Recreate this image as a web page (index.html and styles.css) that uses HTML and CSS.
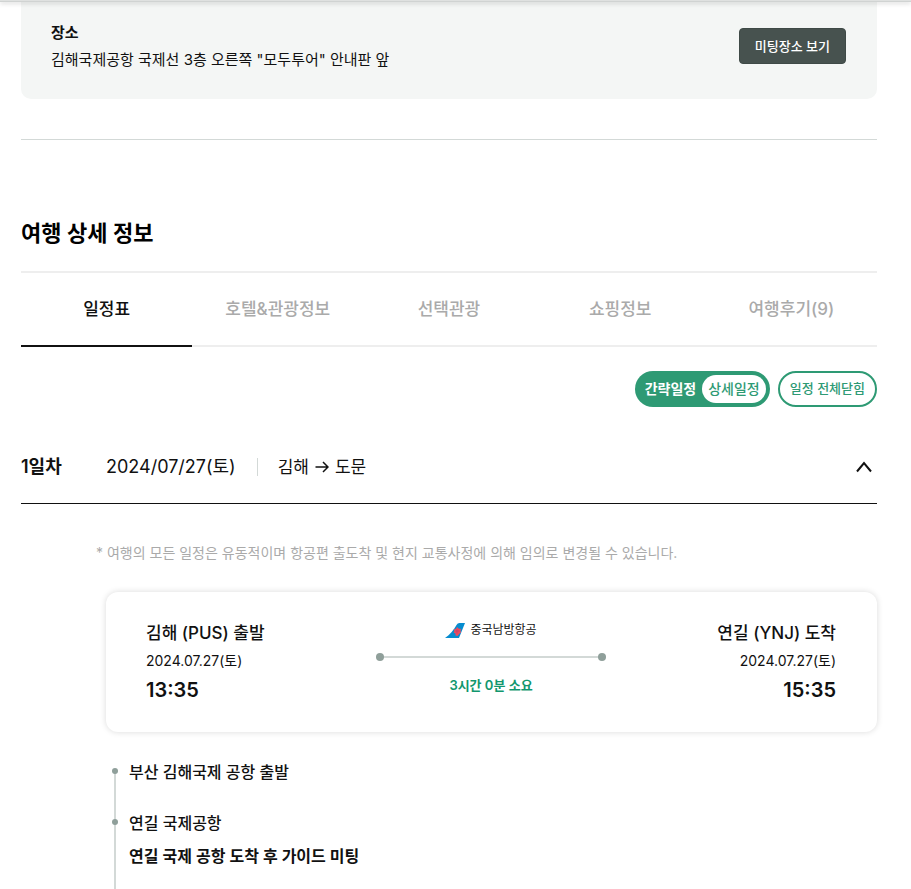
FILE: index.html
```html
<!DOCTYPE html>
<html lang="ko">
<head>
<meta charset="utf-8">
<title>여행 상세 정보</title>
<meta name="viewport" content="width=device-width, initial-scale=1">
<link rel="stylesheet" href="styles.css">
</head>
<body>
<div class="topbar"></div>
<main class="page">
  <section class="place">
    <div>
      <h3 class="place-title">장소</h3>
      <p class="place-text">김해국제공항 국제선 3층 오른쪽 "모두투어" 안내판 앞</p>
    </div>
    <button class="place-button" type="button">미팅장소 보기</button>
  </section>

  <section class="detail">
    <h2 class="detail-title">여행 상세 정보</h2>
    <nav class="tabs">
      <a class="tab tab-active" href="#schedule">일정표</a>
      <a class="tab" href="#hotel">호텔&amp;관광정보</a>
      <a class="tab" href="#option">선택관광</a>
      <a class="tab" href="#shopping">쇼핑정보</a>
      <a class="tab" href="#review">여행후기(9)</a>
    </nav>

    <div class="controls">
      <div class="toggle">
        <button class="toggle-item" type="button">간략일정</button>
        <button class="toggle-item toggle-on" type="button">상세일정</button>
      </div>
      <button class="fold" type="button">일정 전체닫힘</button>
    </div>

    <article id="schedule">
      <header class="day">
        <h3 class="day-number">1일차</h3>
        <span class="day-date">2024/07/27(토)</span>
        <span class="day-route">김해
          <svg class="arrow" viewBox="0 0 14 12" aria-hidden="true"><path d="M0.5 6H13M8 1l5 5-5 5"/></svg>
          도문</span>
        <button class="day-toggle" type="button" aria-label="접기">
          <svg class="chevron" viewBox="0 0 16 12" aria-hidden="true"><path d="M1 10.5 8 2l7 8.5"/></svg>
        </button>
      </header>

      <p class="note">* 여행의 모든 일정은 유동적이며 항공편 출도착 및 현지 교통사정에 의해 임의로 변경될 수 있습니다.</p>

      <div class="flight">
        <div class="stop">
          <strong class="stop-name">김해 (PUS) 출발</strong>
          <span class="stop-date">2024.07.27(토)</span>
          <span class="stop-time">13:35</span>
        </div>
        <div class="leg">
          <span class="airline">
            <svg class="airline-logo" viewBox="0 0 20 15" aria-hidden="true">
              <path class="logo-tail" d="M0 15C5 11.5 9 6.500 11.500 2Q12.500 0 14.500 0H20L14 15Z"/>
              <path class="logo-flower" d="M12 4 13.500 5.500 16 6 15.500 8 16 9.500 14.500 10.500 12.500 13 10.500 12.500 10.500 10.500 8.500 9.500 9.500 8 8.500 6.500 11 6Z"/>
              <path class="logo-vein" d="M10.500 8h4M12 6.500v4"/>
            </svg>
            중국남방항공
          </span>
          <span class="leg-line"></span>
          <span class="leg-time">3시간 0분 소요</span>
        </div>
        <div class="stop stop-end">
          <strong class="stop-name">연길 (YNJ) 도착</strong>
          <span class="stop-date">2024.07.27(토)</span>
          <span class="stop-time">15:35</span>
        </div>
      </div>

      <ol class="timeline">
        <li class="point"><h4 class="point-title">부산 김해국제 공항 출발</h4></li>
        <li class="point">
          <h4 class="point-title">연길 국제공항</h4>
          <p class="point-text">연길 국제 공항 도착 후 가이드 미팅</p>
        </li>
      </ol>
    </article>
  </section>
</main>
</body>
</html>
```

FILE: styles.css
```css
* { box-sizing: border-box; }

body {
  margin: 0;
  background: #fff;
  color: #111;
  font-family: Inter, "Noto Sans CJK KR", sans-serif;
  font-size: 15px;
  line-height: 24px;
}

h2, h3, h4, p, ol { margin: 0; padding: 0; }
button { font-family: inherit; cursor: pointer; }
a { color: inherit; text-decoration: none; }

.topbar {
  position: relative;
  height: 1px;
  background: #dfe1e0;
  box-shadow: 0 1px 0 #d0d3d2, 0 2px 4px rgba(0, 0, 0, 0.4);
}

.page { padding: 0 34px 0 21px; }

.place {
  display: flex;
  justify-content: space-between;
  align-items: center;
  padding: 18px 31px 26px 30px;
  border-radius: 0 0 10px 10px;
  background: #f4f6f5;
}
.place-title { font-size: 15px; line-height: 27px; font-weight: 600; }
.place-text { line-height: 27px; }
.place-button {
  height: 36px;
  padding: 0 15px 2px;
  border: 1px solid #3f4a47;
  border-radius: 4px;
  background: #47524f;
  color: #fff;
  font-size: 13px;
  font-weight: 500;
}

.detail {
  margin-top: 40px;
  padding-top: 74px;
  border-top: 1px solid #d3d9d7;
}
.detail-title { color: #000; font-size: 22px; line-height: 39px; font-weight: 600; }

.tabs {
  display: grid;
  grid-template-columns: repeat(5, 1fr);
  margin-top: 18px;
  border-top: 2px solid #eee;
}
.tab {
  border-bottom: 2px solid #eee;
  color: #aaa;
  font-size: 17px;
  line-height: 72px;
  font-weight: 500;
  text-align: center;
}
.tab-active { border-color: #111; color: #111; }

.controls {
  display: flex;
  justify-content: flex-end;
  gap: 8px;
  margin-top: 24px;
}
.toggle {
  display: flex;
  padding: 4px;
  border-radius: 18px;
  background: #2e9a74;
}
.toggle-item {
  height: 28px;
  padding: 0 6px 3px;
  border: 0;
  border-radius: 14px;
  background: none;
  color: #fff;
  font-size: 14px;
  font-weight: 600;
}
.toggle-on { background: #fff; color: #2e9a74; font-weight: 500; }
.fold {
  height: 36px;
  padding: 0 10px 3px;
  border: 2px solid #2e9a74;
  border-radius: 18px;
  background: #fff;
  color: #2e9a74;
  font-size: 13px;
  font-weight: 500;
}

.day {
  display: flex;
  align-items: center;
  height: 74px;
  margin-top: 23px;
  border-bottom: 1px solid #111;
}
.day-number { width: 85px; font-size: 18px; font-weight: 600; }
.day-date { padding-right: 21px; font-size: 18px; }
.day-route {
  display: flex;
  align-items: center;
  gap: 6px;
  font-size: 17px;
}
.day-route::before {
  width: 1px;
  height: 18px;
  margin-right: 14px;
  background: #d3d9d7;
  content: "";
}
.arrow { width: 14px; height: 12px; fill: none; stroke: #111; stroke-width: 1.5; }
.day-toggle { margin-left: auto; padding: 5px; border: 0; background: none; line-height: 0; }
.chevron { width: 16px; height: 12px; fill: none; stroke: #111; stroke-width: 2; }

.note { margin: 37px 0 0 75px; color: #aaa; font-size: 14px; }

.flight {
  display: flex;
  justify-content: space-between;
  margin: 27px 0 0 85px;
  padding: 26px 41px 26px 40px;
  border-radius: 12px;
  box-shadow: 0 0 6px rgba(0, 0, 0, 0.15);
}
.stop { display: flex; flex-direction: column; }
.stop-end { text-align: right; }
.stop-name { font-size: 17px; line-height: 30px; font-weight: 500; }
.stop-date { font-size: 14px; line-height: 26px; }
.stop-time { font-size: 20px; line-height: 32px; font-weight: 600; }

.leg {
  display: flex;
  flex-direction: column;
  align-items: center;
  width: 230px;
}
.airline {
  display: flex;
  align-items: center;
  gap: 5px;
  font-size: 12px;
}
.airline-logo { width: 20px; height: 15px; }
.logo-tail { fill: #078ccf; }
.logo-flower { fill: #f04a5d; }
.logo-vein { fill: none; stroke: #c4426b; stroke-width: 1; }
.leg-line {
  display: flex;
  justify-content: space-between;
  align-items: center;
  width: 100%;
  height: 8px;
  margin: 11px 0 12px;
  background: linear-gradient(#d3d9d7, #d3d9d7) center / 100% 2px no-repeat;
}
.leg-line::before,
.leg-line::after {
  width: 8px;
  height: 8px;
  border-radius: 50%;
  background: #8f9f9a;
  content: "";
}
.leg-time { color: #12976e; font-size: 13px; font-weight: 600; }

.timeline { margin: 28px 0 0 93px; list-style: none; }
.point { position: relative; padding: 0 0 27px 15px; }
.point::before {
  position: absolute;
  top: 11px;
  bottom: -12px;
  left: 0;
  width: 2px;
  background: #d3d9d7;
  content: "";
}
.point::after {
  position: absolute;
  top: 8px;
  left: -2px;
  width: 6px;
  height: 6px;
  border-radius: 50%;
  background: #8f9f9a;
  content: "";
}
.point-title { font-size: 16px; font-weight: 500; }
.point-text { margin-top: 9px; font-size: 16px; font-weight: 600; }
```
